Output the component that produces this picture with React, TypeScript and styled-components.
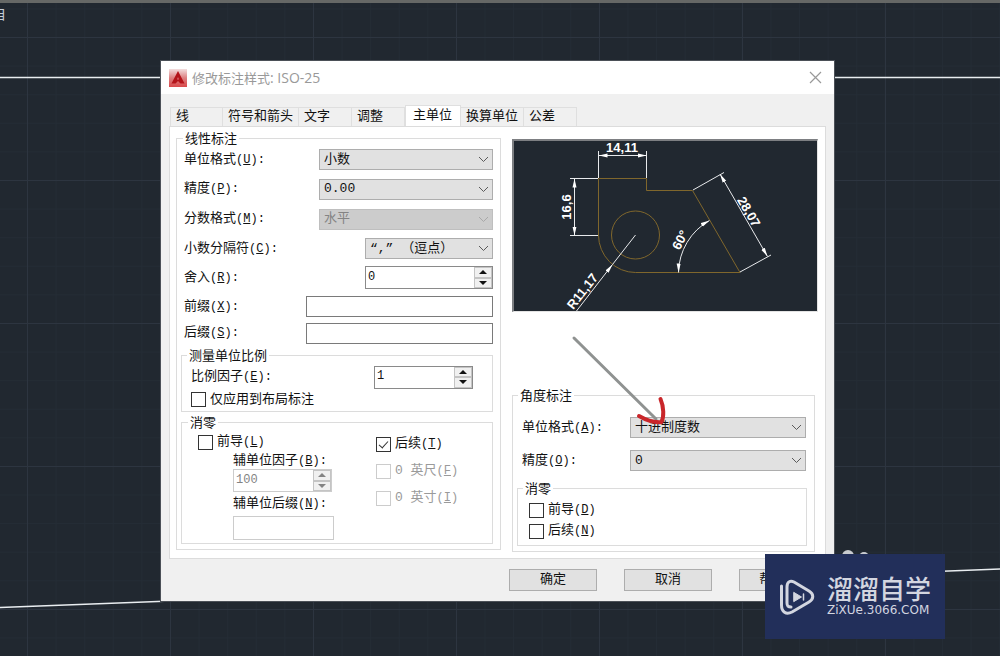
import React, { useId } from 'react';
import styled, { createGlobalStyle } from 'styled-components';

const GlobalStyle = createGlobalStyle`
  *, *::before, *::after { box-sizing: border-box; }
  body {
    margin: 0;
    background: #212830;
    font-family: "Liberation Mono", "Noto Sans CJK SC", sans-serif;
    font-size: 13px;
    line-height: 16px;
    color: #111;
  }
  button, input, select { font: inherit; color: inherit; margin: 0; }
`;

/* ---------- drawing canvas ---------- */

const Canvas = styled.main`
  position: relative;
  min-height: 100vh;
  overflow: hidden;
  padding: 61px 166px 55px 161px;
  background-color: #212830;
  background-image:
    linear-gradient(90deg, #2d3540 1px, transparent 1px),
    linear-gradient(#2d3540 1px, transparent 1px),
    linear-gradient(90deg, #242c35 1px, transparent 1px),
    linear-gradient(#242c35 1px, transparent 1px);
  background-size: 143px 143px, 143px 143px, 28.6px 28.6px, 28.6px 28.6px;
  background-position: 27px 37px;
`;

const TopEdge = styled.div`
  position: absolute;
  inset: 0 0 auto;
  height: 3px;
  background: #666866;
`;

const ViewLabel = styled.span`
  position: absolute;
  top: 7px;
  left: -8px;
  font-size: 14px;
  color: #c3ccd6;
`;

const CanvasLines = styled.svg`
  position: absolute;
  inset: 0;
  width: 100%;
  height: 100%;
`;

/* ---------- dialog frame ---------- */

const Dialog = styled.section`
  position: relative;
  background: #f0f0f0;
  outline: 1px solid #4b5057;
  outline-offset: 0;
`;

const TitleBar = styled.header`
  display: flex;
  align-items: center;
  gap: 5px;
  height: 33px;
  padding: 0 12px 0 8px;
  background: #fff;
`;

const Title = styled.h1`
  flex: 1;
  margin: 0;
  font-family: "Open Sans", "Noto Sans CJK SC", sans-serif;
  font-size: 13px;
  font-weight: 400;
  color: #999;
`;

const StyleName = styled.span`
  font-size: 14px;
`;

const CloseButton = styled.button`
  display: flex;
  padding: 0;
  border: 0;
  background: none;
  color: #999;
`;

const Body = styled.div`
  padding: 11px 8px 0;
`;

const TabList = styled.div`
  display: flex;
  align-items: flex-end;
  height: 21px;
  padding-left: 1px;
`;

const Tab = styled.button<{ $active?: boolean }>`
  height: ${p => (p.$active ? 21 : 19)}px;
  min-width: ${p => (p.$active ? 56 : 53)}px;
  padding: 0 ${p => (p.$active ? 7 : 5)}px;
  border: 1px solid #dfdfdf;
  border-bottom: 0;
  border-left-width: ${p => (p.$active ? 1 : 0)}px;
  background: ${p => (p.$active ? '#fff' : '#f0f0f0')};
  text-align: left;
  line-height: 18px;
  white-space: nowrap;

  &:first-child { border-left-width: 1px; }
`;

const Page = styled.div`
  display: grid;
  grid-template-columns: 325fr 306fr;
  gap: 11px;
  padding: 4px 7px 6px 6px;
  border: 1px solid #dcdcdc;
  background: #fff;
`;

const Footer = styled.footer`
  display: flex;
  justify-content: flex-end;
  gap: 27px;
  padding: 10px 7px 10px;
`;

const PushButton = styled.button`
  width: 88px;
  height: 22px;
  padding: 0;
  border: 1px solid #adadad;
  background: #e1e1e1;
  white-space: nowrap;
`;

/* ---------- groups and rows ---------- */

const Group = styled.fieldset<{ $pad?: string }>`
  min-width: 0;
  margin: 0;
  padding: ${p => p.$pad ?? '0'};
  border: 1px solid #dcdcdc;
`;

const Legend = styled.legend<{ $indent?: number }>`
  height: 14px;
  margin-left: ${p => p.$indent ?? 6}px;
  padding: 0 2px;
  line-height: 17px;
`;

const Row = styled.div<{ $h: number }>`
  display: flex;
  align-items: center;
  justify-content: space-between;
  height: ${p => p.$h}px;
  padding-left: 7px;
`;

const FieldLabel = styled.label`
  white-space: nowrap;
  line-height: 18px;
`;

const Key = styled.span`
  font-size: 12px;
`;

const LeftColumn = styled(Group)`
  margin-bottom: 2px;
  padding: 0 7px 5px 0;
`;

const SubGroup = styled(Group)<{ $top: number }>`
  margin: ${p => p.$top}px 0 0 4px;
`;

const ZeroGrid = styled.div`
  display: grid;
  grid-template-columns: 178px 1fr;
  padding: 5px 0 3px 16px;
`;

const ZeroStack = styled.div<{ $gap: number; $top?: number }>`
  display: flex;
  flex-direction: column;
  align-items: flex-start;
  gap: ${p => p.$gap}px;
  padding-top: ${p => p.$top ?? 0}px;
`;

const SubUnit = styled.div`
  display: grid;
  grid-template-rows: 16px 23px 24px 24px;
  align-items: center;
  padding: 3px 0 0 35px;
`;

const RightColumn = styled.div`
  display: flex;
  flex-direction: column;
  justify-content: space-between;
  padding-top: 8px;
`;

const AngleGroup = styled(Group)`
  margin: 0 3px 0 0;
  padding: 9px 7px 5px 4px;
`;

const AngleRow = styled.div`
  display: flex;
  align-items: center;
  justify-content: space-between;
  height: 33px;
  padding: 0 1px 0 5px;
`;

const AngleZero = styled(Group)`
  margin-top: 4px;
  padding: 7px 0 6px 11px;
`;

/* ---------- controls ---------- */

const SelectWrap = styled.span<{ $w: number; $disabled?: boolean }>`
  position: relative;
  display: flex;
  width: ${p => p.$w}px;
  color: ${p => (p.$disabled ? '#838383' : '#111')};

  select {
    appearance: none;
    width: 100%;
    height: 21px;
    padding: 0 20px 0 4px;
    border: 1px solid ${p => (p.$disabled ? '#bfbfbf' : '#adadad')};
    border-radius: 0;
    background: ${p => (p.$disabled ? '#ccc' : '#e1e1e1')};
    opacity: 1;
  }
`;

const Chevron = styled.svg<{ $disabled?: boolean }>`
  position: absolute;
  top: 7px;
  right: 4px;
  color: ${p => (p.$disabled ? '#a8a8a8' : '#5a5a5a')};
  pointer-events: none;
`;

const TextBox = styled.input<{ $w: number; $h?: number }>`
  width: ${p => p.$w}px;
  height: ${p => p.$h ?? 21}px;
  padding: 0 3px;
  border: 1px solid #7a7a7a;
  border-radius: 0;
  background: #fff;

  &:disabled { border-color: #ccc; }
`;

const Spin = styled.span<{ $w: number; $disabled?: boolean }>`
  display: flex;
  width: ${p => p.$w}px;
  height: 23px;
  border: 1px solid ${p => (p.$disabled ? '#ccc' : '#8a8a8a')};
  background: #fff;
  color: ${p => (p.$disabled ? '#838383' : '#111')};

  input {
    flex: 1;
    min-width: 0;
    padding: 0 2px 2px;
    border: 0;
    background: none;
    font-size: 12px;
  }
`;

const SpinButtons = styled.span`
  display: grid;
  grid-template-rows: 1fr 1fr;
  width: 18px;
  background: #e6e6e6;
`;

const SpinButton = styled.button`
  display: flex;
  align-items: center;
  justify-content: center;
  padding: 0;
  border: 1px solid #c4c4c4;
  background: #f0f0f0;
`;

const CheckLabel = styled.label<{ $disabled?: boolean }>`
  display: flex;
  align-items: center;
  gap: 4px;
  height: 16px;
  white-space: nowrap;
  color: ${p => (p.$disabled ? '#9a9a9a' : '#111')};

  input {
    appearance: none;
    position: relative;
    width: 15px;
    height: 15px;
    border: 1px solid ${p => (p.$disabled ? '#ccc' : '#333')};
    background: #fff;
  }

  input:checked::after {
    content: "";
    position: absolute;
    top: 1px;
    left: 4px;
    width: 5px;
    height: 9px;
    border: solid #333;
    border-width: 0 1px 1px 0;
    transform: rotate(42deg);
  }
`;

const Preview = styled.div`
  border: 2px solid #7d7f82;
  border-right: 1px solid #e3e3e3;
  border-bottom: 1px solid #e3e3e3;
  background: #212830;

  svg { display: block; width: 100%; }
  text { font: bold 13px "Liberation Sans", sans-serif; fill: #fff; text-anchor: middle; }
`;

const Annotation = styled.svg`
  position: absolute;
  z-index: 2;
  left: -60px;
  top: -82px;
  pointer-events: none;
`;

/* ---------- site badge ---------- */

const Badge = styled.aside`
  position: absolute;
  right: 55px;
  bottom: 17px;
  display: flex;
  align-items: center;
  gap: 12px;
  width: 180px;
  height: 85px;
  padding: 0 0 0 14px;
  background: #222f5a;
  color: #d3d6e0;
`;

const BadgeText = styled.div`
  display: flex;
  flex-direction: column;
  gap: 2px;
  padding-bottom: 4px;
`;

const BadgeName = styled.strong`
  font: 500 26px/28px "Noto Sans CJK SC", sans-serif;
`;

const BadgeSite = styled.span`
  font: 12px/12px "DejaVu Sans", sans-serif;
`;

/* ---------- composed parts ---------- */

function Hot({ k, colon }: { k: string; colon?: boolean }) {
  return <Key>(<u>{k}</u>){colon ? ':' : ''}</Key>;
}

function Select({ id, w, value, disabled, children }: {
  id: string; w: number; value: string; disabled?: boolean; children?: React.ReactNode;
}) {
  return (
    <SelectWrap $w={w} $disabled={disabled}>
      <select id={id} disabled={disabled} defaultValue={value}>
        <option>{value}</option>
      </select>
      <Chevron $disabled={disabled} width="11" height="7" viewBox="0 0 11 7" fill="none" stroke="currentColor">
        <path d="M1 1l4.500 4.500L10 1" />
      </Chevron>
      {children}
    </SelectWrap>
  );
}

function Spinner({ id, w, value, disabled }: { id: string; w: number; value: string; disabled?: boolean }) {
  return (
    <Spin $w={w} $disabled={disabled}>
      <input id={id} type="text" defaultValue={value} disabled={disabled} />
      <SpinButtons>
        <SpinButton type="button" aria-label="增加" disabled={disabled}>
          <svg width="8" height="4" viewBox="0 0 8 4"><path d="M4 0l4 4H0z" fill="currentColor" /></svg>
        </SpinButton>
        <SpinButton type="button" aria-label="减少" disabled={disabled}>
          <svg width="8" height="4" viewBox="0 0 8 4"><path d="M4 4l4-4H0z" fill="currentColor" /></svg>
        </SpinButton>
      </SpinButtons>
    </Spin>
  );
}

function Check({ text, k, checked, disabled }: { text: string; k?: string; checked?: boolean; disabled?: boolean }) {
  return (
    <CheckLabel $disabled={disabled}>
      <input type="checkbox" defaultChecked={checked} disabled={disabled} />
      <span>{text}{k && <Hot k={k} />}</span>
    </CheckLabel>
  );
}

function Field({ h, text, k, render }: { h: number; text: string; k: string; render: (id: string) => React.ReactNode }) {
  const id = useId();
  return (
    <Row $h={h}>
      <FieldLabel htmlFor={id}>{text}<Hot k={k} colon /></FieldLabel>
      {render(id)}
    </Row>
  );
}

function DimensionPreview() {
  return (
    <Preview>
      <svg viewBox="2 2 303 170" role="img" aria-label="标注预览">
        <defs>
          <marker id="tip" viewBox="0 0 9 4" refX="9" refY="2" markerWidth="9" markerHeight="5" markerUnits="userSpaceOnUse" orient="auto-start-reverse">
            <path d="M0 0l9 2-9 2z" fill="#fff" />
          </marker>
        </defs>
        <g fill="none" stroke="#80672c">
          <path d="M86.500 39.500H134.500V51.500H180.500L228 133.500H123.500A37 37.500 0 0 1 86.500 96Z" />
          <circle cx="123.500" cy="96" r="24" />
        </g>
        <g fill="none" stroke="#e8eaec">
          <path d="M86.500 12V39M134.500 12V39M58 39.500H86M58 96.500H86M181 51L212 33.500M228 133L259 116" />
          <path d="M86.500 16.500H134.500" markerStart="url(#tip)" markerEnd="url(#tip)" />
          <path d="M62.500 39.500V96.500" markerStart="url(#tip)" markerEnd="url(#tip)" />
          <path d="M208 35L255.500 117.500" markerStart="url(#tip)" markerEnd="url(#tip)" />
          <path d="M166.500 133.500A61 61 0 0 1 197.500 81.500" markerStart="url(#tip)" markerEnd="url(#tip)" />
          <path d="M64.500 172L100.500 125.500" markerEnd="url(#tip)" />
          <path d="M100.500 125.500L123.500 96" />
        </g>
        <text x="110" y="13">14,11</text>
        <text transform="translate(59 68) rotate(-90)">16,6</text>
        <text transform="translate(233 75) rotate(60)">28,07</text>
        <text transform="translate(172 103) rotate(-62)">60°</text>
        <text transform="translate(74 155) rotate(-52)">R11,17</text>
      </svg>
    </Preview>
  );
}

export default function App() {
  const ids = { factor: useId(), suffix: useId(), unit: useId(), precision: useId() };
  return (
    <>
      <GlobalStyle />
      <Canvas>
        <CanvasLines stroke="#e9edf0" strokeWidth="1.500" aria-hidden="true">
          <line x1="0" y1="77.500" x2="100%" y2="77.500" />
          <line x1="0" y1="607.500" x2="100%" y2="569" />
        </CanvasLines>
        <CanvasLines fill="#c9ccd0" aria-hidden="true">
          <circle cx="848" cy="556" r="6" />
          <circle cx="864" cy="557" r="5" />
        </CanvasLines>
        <TopEdge />
        <ViewLabel>自</ViewLabel>

        <Dialog role="dialog" aria-labelledby="dialog-title">
          <TitleBar>
            <svg width="18" height="18" viewBox="0 0 18 18" aria-hidden="true">
              <defs>
                <linearGradient id="logo" x1="0" y1="0" x2="0" y2="1">
                  <stop offset="0" stopColor="#f3dede" />
                  <stop offset="0.500" stopColor="#dd7f80" />
                  <stop offset="1" stopColor="#d9484a" />
                </linearGradient>
              </defs>
              <rect width="18" height="18" fill="url(#logo)" />
              <path d="M9 2L15.500 14.500H11.500L9 12 6.500 14.500H2.500Z" fill="#b3141a" />
              <path d="M9 8L10 10.500H8Z" fill="#e07a7a" />
            </svg>
            <Title id="dialog-title">修改标注样式<StyleName>: ISO-25</StyleName></Title>
            <CloseButton type="button" aria-label="关闭">
              <svg width="13" height="13" viewBox="0 0 13 13" stroke="currentColor" strokeWidth="1.200">
                <path d="M1 1l11 11M12 1L1 12" />
              </svg>
            </CloseButton>
          </TitleBar>

          <Body>
            <TabList role="tablist">
              <Tab role="tab">线</Tab>
              <Tab role="tab">符号和箭头</Tab>
              <Tab role="tab">文字</Tab>
              <Tab role="tab">调整</Tab>
              <Tab role="tab" aria-selected="true" $active>主单位</Tab>
              <Tab role="tab">换算单位</Tab>
              <Tab role="tab">公差</Tab>
            </TabList>

            <Page role="tabpanel">
              <LeftColumn>
                <Legend>线性标注</Legend>
                <Field h={29} text="单位格式" k="U" render={id => <Select id={id} w={174} value="小数" />} />
                <Field h={30} text="精度" k="P" render={id => <Select id={id} w={174} value="0.00" />} />
                <Field h={30} text="分数格式" k="M" render={id => <Select id={id} w={174} value="水平" disabled />} />
                <Field h={29} text="小数分隔符" k="C" render={id => <Select id={id} w={128} value="“,” （逗点）" />} />
                <Field h={29} text="舍入" k="R" render={id => <Spinner id={id} w={128} value="0" />} />
                <Field h={29} text="前缀" k="X" render={id => <TextBox id={id} $w={187} />} />
                <Field h={24} text="后缀" k="S" render={id => <TextBox id={id} $w={187} />} />

                <SubGroup $top={3} $pad="0 19px 4px 2px">
                  <Legend $indent={3}>测量单位比例</Legend>
                  <Field h={30} text="比例因子" k="E" render={id => <Spinner id={id} w={99} value="1" />} />
                  <Row $h={15}><Check text="仅应用到布局标注" /></Row>
                </SubGroup>

                <SubGroup $top={3}>
                  <Legend>消零</Legend>
                  <ZeroGrid>
                    <div>
                      <Check text="前导" k="L" />
                      <SubUnit>
                        <FieldLabel htmlFor={ids.factor}>辅单位因子<Hot k="B" colon /></FieldLabel>
                        <Spinner id={ids.factor} w={99} value="100" disabled />
                        <FieldLabel htmlFor={ids.suffix}>辅单位后缀<Hot k="N" colon /></FieldLabel>
                        <TextBox id={ids.suffix} $w={101} $h={24} disabled />
                      </SubUnit>
                    </div>
                    <ZeroStack $gap={11} $top={2}>
                      <Check text="后续" k="T" checked />
                      <Check text="0 英尺" k="F" disabled />
                      <Check text="0 英寸" k="I" disabled />
                    </ZeroStack>
                  </ZeroGrid>
                </SubGroup>
              </LeftColumn>

              <RightColumn>
                <DimensionPreview />
                <AngleGroup>
                  <Legend $indent={1}>角度标注</Legend>
                  <AngleRow>
                    <FieldLabel htmlFor={ids.unit}>单位格式<Hot k="A" colon /></FieldLabel>
                    <Select id={ids.unit} w={176} value="十进制度数">
                      <Annotation width="100" height="94" viewBox="0 0 100 94" fill="none" strokeLinecap="round" aria-hidden="true">
                        <path d="M4 3L86 84" stroke="#8f9291" strokeWidth="3" />
                        <path d="M90.500 64C94 72 94 82 91.500 87C83 88 76 85 69 81" stroke="#c9262a" strokeWidth="4" strokeLinejoin="round" />
                      </Annotation>
                    </Select>
                  </AngleRow>
                  <AngleRow>
                    <FieldLabel htmlFor={ids.precision}>精度<Hot k="O" colon /></FieldLabel>
                    <Select id={ids.precision} w={176} value="0" />
                  </AngleRow>
                  <AngleZero>
                    <Legend $indent={-6}>消零</Legend>
                    <ZeroStack $gap={5}>
                      <Check text="前导" k="D" />
                      <Check text="后续" k="N" />
                    </ZeroStack>
                  </AngleZero>
                </AngleGroup>
              </RightColumn>
            </Page>
          </Body>

          <Footer>
            <PushButton type="button">确定</PushButton>
            <PushButton type="button">取消</PushButton>
            <PushButton type="button">帮助<Hot k="H" /></PushButton>
          </Footer>
        </Dialog>

        <Badge>
          <svg width="36" height="38" viewBox="0 0 36 38" fill="none" stroke="#d3d6e0" strokeWidth="3" strokeLinecap="round" strokeLinejoin="round" aria-hidden="true">
            <path d="M2.500 8V27C2.500 34 7 37 13 34L30 24C35 21 35 16 30 13L15 4C11 2 8 4 8 9V25C8 28 9 29 12 29" />
            <path d="M15 14.500L22.500 19L15 23.500Z" fill="#d3d6e0" strokeWidth="1" />
            <path d="M24.500 16V22" strokeWidth="1.500" />
          </svg>
          <BadgeText>
            <BadgeName>溜溜自学</BadgeName>
            <BadgeSite>ZiXUe.3066.COM</BadgeSite>
          </BadgeText>
        </Badge>
      </Canvas>
    </>
  );
}
